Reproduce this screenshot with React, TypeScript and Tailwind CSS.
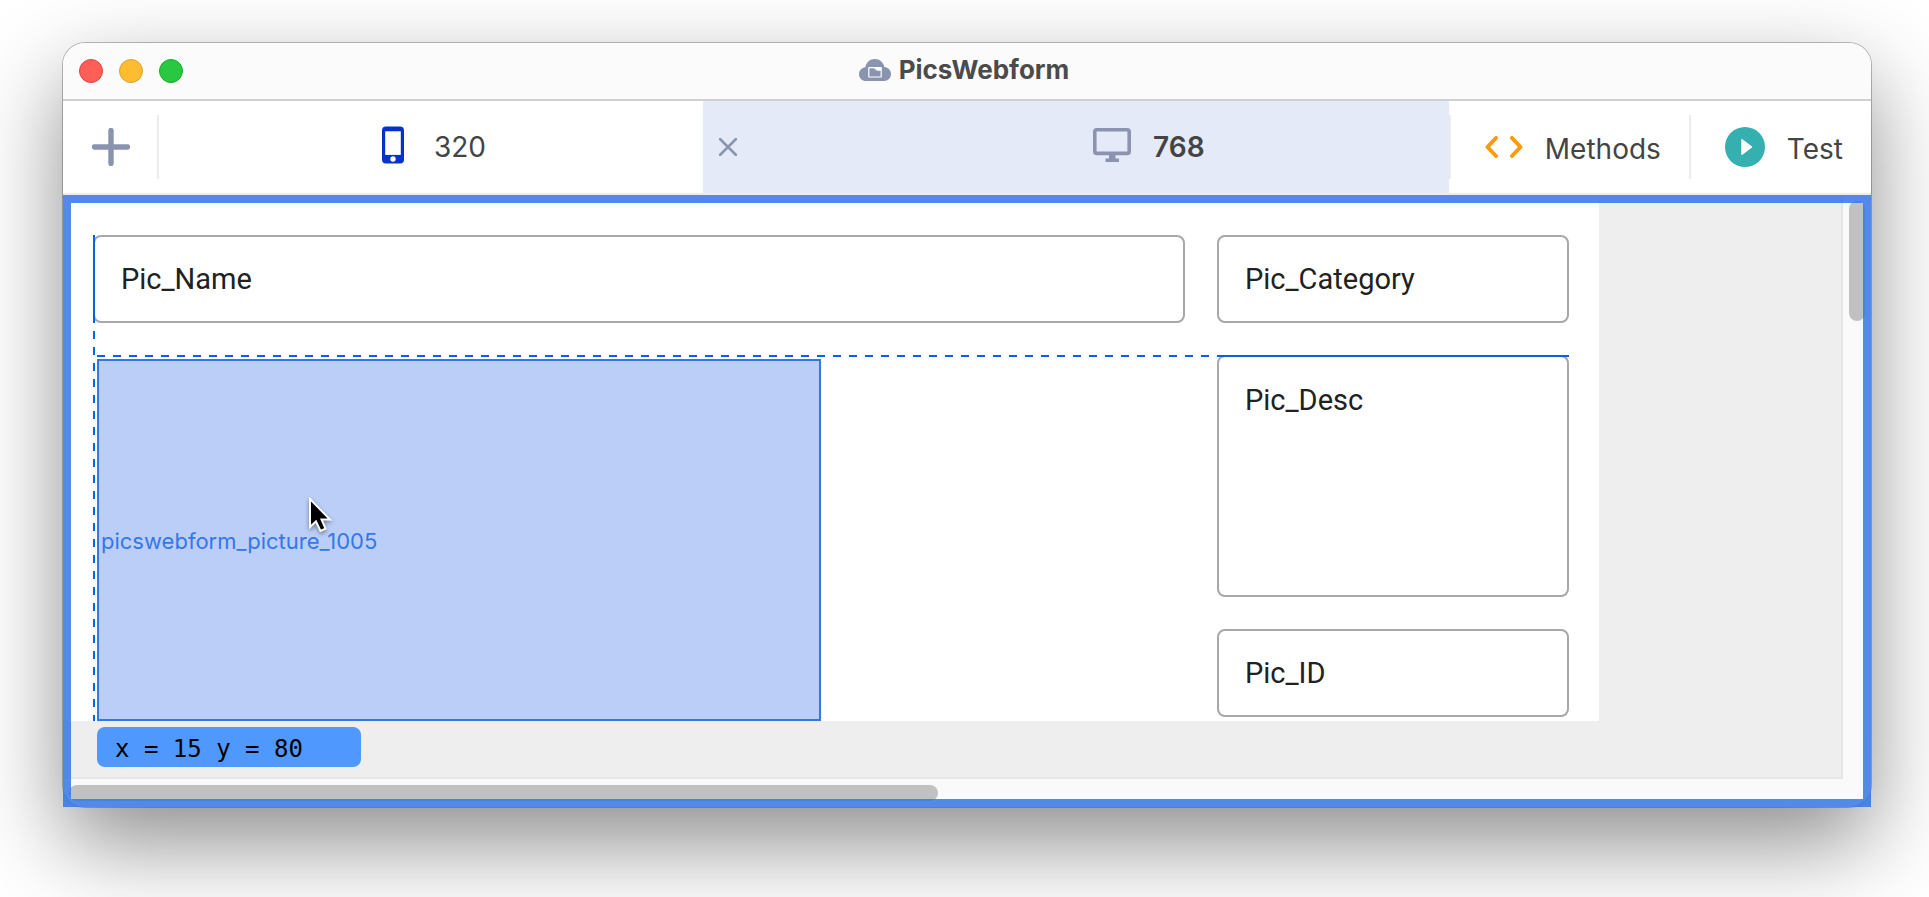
import type { ReactNode } from "react";

function PlusIcon() {
	return (
		<svg viewBox="0 0 38 38" className="size-[38px]" aria-hidden="true">
			<path
				d="M19 2.5v33M2.5 19h33"
				stroke="#8a94b0"
				strokeWidth="5.4"
				strokeLinecap="round"
			/>
		</svg>
	);
}

function PhoneIcon() {
	return (
		<svg
			viewBox="0 0 22 38"
			className="mb-1 h-[38px] w-[22px]"
			aria-hidden="true"
		>
			<rect y=".5" width="22" height="37" rx="4" fill="#0433cc" />
			<rect x="3.2" y="5.3" width="15.6" height="23.6" fill="#fff" />
			<circle cx="11" cy="33" r="2.7" fill="#fff" />
		</svg>
	);
}

function MonitorIcon() {
	return (
		<svg
			viewBox="0 0 38 34"
			className="mb-1 h-[34px] w-[38px]"
			aria-hidden="true"
		>
			<rect
				x="1.8"
				y="1.8"
				width="34.4"
				height="23.6"
				rx="2"
				fill="none"
				stroke="#8a94b0"
				strokeWidth="3.6"
			/>
			<path d="M16 26h6.500v4.500h3.500V34H12.500v-3.500H16z" fill="#8a94b0" />
		</svg>
	);
}

function CloudIcon() {
	return (
		<svg viewBox="0 0 32 22" className="h-[22px] w-8" aria-hidden="true">
			<path
				d="M7 22C3 22 0 19 0 15.200 0 11.500 2.700 8.600 6.300 8.200 7.200 3.500 11 0 15.800 0c4.800 0 8.700 3.400 9.500 8 3.800.3 6.700 3.200 6.700 7 0 4-3 7-7 7z"
				fill="#8a94b0"
			/>
			<rect
				x="9.800"
				y="8.600"
				width="12.400"
				height="9.400"
				rx=".4"
				fill="none"
				stroke="#fff"
				strokeWidth="1.200"
			/>
			<path d="M15.500 8.600h6.500v3.200h-4.500V10.400h-2z" fill="#fff" />
		</svg>
	);
}

function CodeIcon() {
	return (
		<svg viewBox="0 0 38 22" className="h-[22px] w-[38px]" aria-hidden="true">
			<path
				d="M11 2 2.500 11 11 20M27 2l8.500 9L27 20"
				fill="none"
				stroke="#ff9a0a"
				strokeWidth="4"
				strokeLinecap="round"
				strokeLinejoin="round"
			/>
		</svg>
	);
}

function PlayIcon() {
	return (
		<svg viewBox="0 0 40 40" className="size-10" aria-hidden="true">
			<circle cx="20" cy="20" r="20" fill="#34b0b0" />
			<path
				d="M17 12.800v14.400L26.500 20z"
				fill="#fff"
				stroke="#fff"
				strokeWidth="1.500"
				strokeLinejoin="round"
			/>
		</svg>
	);
}

function Pointer() {
	return (
		<svg
			viewBox="0 0 26 38"
			className="pointer-events-none absolute top-[136px] left-[209px] h-[38px] w-[26px] drop-shadow-[0_2px_2px_rgba(0,0,0,0.4)]"
			aria-hidden="true"
		>
			<path
				d="M2 2v28l6-5.500 4.500 9.500 5-2.300L13.500 22.500H22z"
				fill="#000"
				stroke="#fff"
				strokeWidth="2"
			/>
		</svg>
	);
}

function Divider() {
	return <div className="h-16 w-0.5 shrink-0 bg-[#ececec]" />;
}

function ToolButton({ icon, label }: { icon: ReactNode; label: string }) {
	return (
		<button
			type="button"
			className="flex items-center gap-[22px] pr-7 pl-[34px] text-[28px]"
		>
			{icon}
			<span className="pt-1">{label}</span>
		</button>
	);
}

const fieldClass =
	"block w-full resize-none rounded-lg border-2 border-[#a8a8a8] bg-white px-[26px] font-['Roboto',sans-serif] text-[29px] leading-8 text-[#212121] outline-none";

function Field({ name }: { name: string }) {
	return (
		<input
			type="text"
			aria-label={name}
			defaultValue={name}
			className={`${fieldClass} h-[88px]`}
		/>
	);
}

export default function App() {
	return (
		<div className="min-h-screen overflow-hidden bg-white pt-[43px] pr-[58px] pb-[90px] pl-[63px] font-['Inter',sans-serif] text-[#444]">
			<main className="rounded-[22px] bg-white shadow-[0_0_0_1px_rgba(0,0,0,0.25),0_36px_90px_rgba(0,0,0,0.45)]">
				<header className="grid h-[58px] grid-cols-[1fr_auto_1fr] items-center rounded-t-[22px] border-b-2 border-[#d0d0d0] bg-[#fbfbfb] pr-[22px] pl-4">
					<div className="flex gap-4">
						<button
							type="button"
							aria-label="Close"
							className="size-6 rounded-full border border-[#e0443e] bg-[#ff5f57]"
						/>
						<button
							type="button"
							aria-label="Minimize"
							className="size-6 rounded-full border border-[#dea034] bg-[#febc2e]"
						/>
						<button
							type="button"
							aria-label="Zoom"
							className="size-6 rounded-full border border-[#1aab29] bg-[#28c840]"
						/>
					</div>
					<div className="flex items-center gap-2 pb-0.5">
						<CloudIcon />
						<h1 className="font-bold text-[26px] text-[#4b4b4b] leading-8">
							PicsWebform
						</h1>
					</div>
				</header>

				<nav className="flex h-[94px] items-center border-[#ececec] border-b-2">
					<button
						type="button"
						aria-label="Add breakpoint"
						className="flex w-[94px] justify-center pl-0.5"
					>
						<PlusIcon />
					</button>
					<Divider />
					<button
						type="button"
						className="flex h-full flex-[538] items-center justify-center gap-[30px] pl-1.5 text-[28px]"
					>
						<PhoneIcon />
						320
					</button>
					<div className="flex h-full flex-[746] items-center bg-[#e4eaf8]">
						<button type="button" aria-label="Remove breakpoint" className="pl-4">
							<svg viewBox="0 0 18 18" className="size-[18px]" aria-hidden="true">
								<path
									d="M1 1l16 16M17 1 1 17"
									stroke="#8a94b0"
									strokeWidth="2.500"
									strokeLinecap="round"
								/>
							</svg>
						</button>
						<button
							type="button"
							className="flex flex-1 items-center justify-center gap-[22px] pl-[112px] font-semibold text-[28px]"
						>
							<MonitorIcon />
							768
						</button>
					</div>
					<Divider />
					<ToolButton icon={<CodeIcon />} label="Methods" />
					<Divider />
					<ToolButton icon={<PlayIcon />} label="Test" />
				</nav>

				<section className="relative">
					<div className="overflow-hidden rounded-b-[22px] bg-[#fafafa]">
						<div className="flex">
							<div className="flex-1 border-[#e6e6e6] border-r-2 border-b-2 bg-[#eee]">
								{/* form */}
								<form className="mr-[242px] grid grid-cols-[1fr_352px] gap-8 bg-white px-[30px] pt-10">
									<div className="relative flex flex-col gap-9">
										<Field name="Pic_Name" />
										<div className="flex w-2/3 flex-1 pl-1">
											<div className="relative flex flex-1 items-center border-2 border-[#3478e8] bg-[#bacef8] px-0.5 pt-0.5 text-[#3478e8] text-[22px]">
												picswebform_picture_1005
												<Pointer />
											</div>
										</div>
										{/* alignment guides */}
										<div className="absolute top-0 left-0 h-[88px] w-0.5 bg-[#0862e4]" />
										<div className="absolute top-24 bottom-0 left-0 w-0.5 bg-[repeating-linear-gradient(to_bottom,#0862e4_0_8px,transparent_8px_16px)]" />
										<div className="absolute top-[120px] -right-8 left-1 h-0.5 bg-[repeating-linear-gradient(to_right,#0862e4_0_8px,transparent_8px_16px)]" />
									</div>
									<div className="flex flex-col gap-8 pb-1">
										<Field name="Pic_Category" />
										<div className="relative">
											<textarea
												aria-label="Pic_Desc"
												defaultValue="Pic_Desc"
												className={`${fieldClass} h-[242px] py-[27px]`}
											/>
											<div className="absolute inset-x-0 top-0 h-0.5 bg-[#0862e4]" />
										</div>
										<Field name="Pic_ID" />
									</div>
								</form>
								<div className="px-[34px] pt-1.5 pb-2.5">
									<output className="block h-10 w-[264px] rounded-lg bg-[#4f98fd] px-[18px] pt-1 font-['DejaVu_Sans_Mono',monospace] text-2xl text-black leading-9">
										x = 15 y = 80
									</output>
								</div>
							</div>
							<div className="w-7 p-1.5">
								<div className="h-[120px] rounded-full bg-[#c1c1c1]" />
							</div>
						</div>
						<div className="h-7 p-1.5">
							<div className="h-4 w-[48.400%] rounded-full bg-[#c1c1c1]" />
						</div>
					</div>
					{/* drop target highlight */}
					<div className="pointer-events-none absolute inset-0 border-8 border-[rgba(48,117,233,0.85)]" />
				</section>
			</main>
		</div>
	);
}
